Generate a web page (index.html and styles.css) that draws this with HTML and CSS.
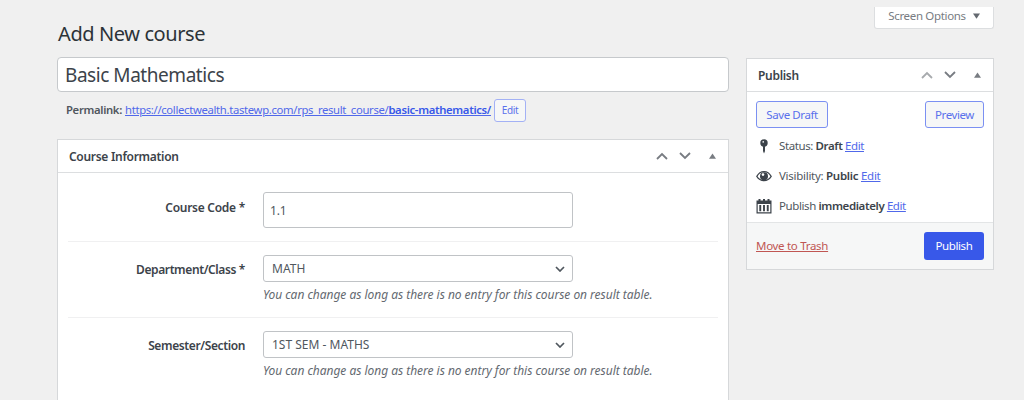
FILE: index.html
```html
<!DOCTYPE html>
<html lang="en">
<head>
<meta charset="utf-8">
<title>Add New course</title>
<link rel="stylesheet" href="styles.css">
</head>
<body>
<div class="page">
  <main class="main">
    <h1 class="page-title"><span>Add New course</span></h1>
    <div class="title-field"><span>Basic Mathematics</span></div>
    <div class="permalink">
      <span class="permalink-label">Permalink:</span>
      <a class="link permalink-url">https://collectwealth.tastewp.com/rps_result_course/<b>basic-mathematics/</b></a>
      <span class="btn btn-small">Edit</span>
    </div>
    <section class="box course-box">
      <header class="box-head">
        <h2 class="box-title course-title">Course Information</h2>
        <div class="handles">
          <svg class="chev" viewBox="0 0 12 8"><path d="M1 7 6 2l5 5"/></svg>
          <svg class="chev" viewBox="0 0 12 8"><path d="M1 1l5 5 5-5"/></svg>
          <svg class="tri" viewBox="0 0 8 6"><path d="M4 0l4 6H0z"/></svg>
        </div>
      </header>
      <div class="rows">
        <div class="row row-code">
          <label class="label label-code">Course Code *</label>
          <div class="field"><div class="input">1.1</div></div>
        </div>
        <div class="row">
          <label class="label">Department/Class *</label>
          <div class="field">
            <div class="select"><span>MATH</span><svg class="caret" viewBox="0 0 10 6"><path d="M1 1l4 4 4-4"/></svg></div>
            <p class="hint">You can change as long as there is no entry for this course on result table.</p>
          </div>
        </div>
        <div class="row row-last">
          <label class="label">Semester/Section</label>
          <div class="field">
            <div class="select"><span>1ST SEM - MATHS</span><svg class="caret" viewBox="0 0 10 6"><path d="M1 1l4 4 4-4"/></svg></div>
            <p class="hint">You can change as long as there is no entry for this course on result table.</p>
          </div>
        </div>
      </div>
    </section>
  </main>
  <aside class="side">
    <div class="screen-options"><span>Screen Options</span><svg class="tri-down" viewBox="0 0 8 6"><path d="M0 0h8L4 6z"/></svg></div>
    <section class="box publish-box">
      <header class="box-head">
        <h2 class="box-title">Publish</h2>
        <div class="handles">
          <svg class="chev faded" viewBox="0 0 12 8"><path d="M1 7 6 2l5 5"/></svg>
          <svg class="chev" viewBox="0 0 12 8"><path d="M1 1l5 5 5-5"/></svg>
          <svg class="tri" viewBox="0 0 8 6"><path d="M4 0l4 6H0z"/></svg>
        </div>
      </header>
      <div class="actions">
        <span class="btn btn-save">Save Draft</span>
        <span class="btn btn-preview">Preview</span>
      </div>
      <ul class="meta">
        <li>
          <svg class="icon" viewBox="0 0 16 16"><circle cx="8" cy="5" r="3.700"/><path d="M7 8h2v5l-1 2.500L7 13z"/><circle class="shine" cx="7.200" cy="3.900" r=".8"/></svg>
          <span>Status: <b>Draft</b> <a class="link">Edit</a></span>
        </li>
        <li>
          <svg class="icon" viewBox="0 0 16 16"><path class="outline" d="M.8 8.400C4.200 2 11.800 2 15.200 8.400 11.800 14 4.200 14 .8 8.400z"/><circle cx="8" cy="8.200" r="4"/><circle class="shine" cx="7" cy="6.600" r="1.300"/></svg>
          <span class="meta-visibility">Visibility: <b>Public</b> <a class="link">Edit</a></span>
        </li>
        <li>
          <svg class="icon" viewBox="0 0 16 16"><path fill-rule="evenodd" d="M.5 2.500h2V1h2v1.500h2.500V1h2v1.500h2.500V1h2v1.500h2v13H.5zM1.700 6v8.300h12.600V6z"/><path d="M3.300 7h1.900v6.300H3.300zM7.050 7h1.900v6.300h-1.900zM10.800 7h1.900v6.300h-1.900z"/></svg>
          <span>Publish <b>immediately</b> <a class="link">Edit</a></span>
        </li>
      </ul>
      <footer class="box-foot">
        <a class="trash">Move to Trash</a>
        <span class="btn-primary">Publish</span>
      </footer>
    </section>
  </aside>
</div>
</body>
</html>
```
FILE: styles.css
```css
* { box-sizing: border-box; }
body {
  margin: 0;
  height: 400px;
  overflow: hidden;
  background: #f0f0f0;
  font: 11.5px/16px "Noto Sans", "Open Sans", sans-serif;
  color: #50575e;
}
h1, h2, p, ul { margin: 0; padding: 0; font-weight: 400; }
b { font-weight: 600; color: #3c434a; }
span, a, h2, label, p { white-space: nowrap; }
svg { display: block; flex: none; }

.page {
  display: grid;
  grid-template-columns: 672px 248px;
  column-gap: 17px;
  padding-left: 57px;
}
.page-title { padding: 20px 0 0 1px; height: 57px; font-size: 20px; line-height: 28px; color: #2c3338; letter-spacing: -.4px; }
.title-field {
  height: 35px;
  padding: 0 7px;
  border: 1.500px solid #c6c9cc;
  border-radius: 4px;
  background: #fff;
  font-size: 19px;
  line-height: 35px;
  color: #3c434a;
  letter-spacing: -.45px;
}
.permalink { display: flex; align-items: center; height: 47px; padding: 0 0 11px 9px; font-size: 11.300px; letter-spacing: -.33px; }
.permalink-label { font-weight: 600; margin-right: 3px; }
.permalink-url b { color: #3858e9; }
.link { color: #5068ea; text-decoration: underline; }

.btn {
  display: flex;
  align-items: center;
  justify-content: center;
  height: 27px;
  border: 1px solid #7b90f2;
  border-radius: 3px;
  background: #f6f7f7;
  color: #5a71ec;
  letter-spacing: -.4px;
}
.btn-small { width: 32px; height: 23px; margin-left: 3px; font-size: 10px; letter-spacing: -.3px; border-color: #a3b1f5; }

.box { border: 1px solid #d6d8da; background: #fff; }
.box-head {
  display: flex;
  align-items: center;
  justify-content: space-between;
  height: 33px;
  padding: 0 12px 0 11px;
  border-bottom: 1px solid #dcdee0;
}
.box-title { padding-top: 1px; font-size: 12px; font-weight: 600; color: #3c434a; letter-spacing: -.3px; }
.handles { display: flex; align-items: center; gap: 11px; }
.chev { width: 12px; height: 8px; fill: none; stroke: #787c82; stroke-width: 1.800; }
.faded { stroke: #a7aaad; }
.tri { width: 7px; height: 6px; margin-left: 7px; fill: #787c82; }

.course-box { height: 280px; }
.rows { padding: 0 10px; font-size: 12px; }
.row { display: flex; height: 76px; padding-top: 13px; border-bottom: 1px solid #f0f0f1; }
.row-code { height: 69px; padding-top: 19px; }
.row-last { border: 0; }
.label { width: 177px; padding-top: 7px; font-weight: 600; text-align: right; color: #3c434a; letter-spacing: -.38px; }
.label-code { padding-top: 8px; letter-spacing: -.27px; }
.field { margin-left: 18px; }
.input, .select { width: 310px; border: 1px solid #c0c3c6; border-radius: 3px; }
.input { height: 36px; padding: 10px 6px; letter-spacing: -.2px; }
.select { display: flex; align-items: center; justify-content: space-between; height: 27px; padding: 0 7px 0 8px; }
.caret { width: 10px; height: 6px; fill: none; stroke: #50575e; stroke-width: 1.700; }
.hint { padding-top: 5px; font-style: italic; letter-spacing: -.03px; color: #646970; }

.screen-options {
  display: flex;
  align-items: center;
  justify-content: center;
  gap: 7px;
  width: 120px;
  height: 22px;
  margin: 7px 0 29px auto;
  padding-bottom: 4px;
  border: 1px solid #dcdee0;
  border-top: 0;
  border-radius: 0 0 3px 3px;
  background: #fff;
  color: #787c82;
  letter-spacing: -.33px;
}
.tri-down { width: 7px; height: 6px; fill: #646970; }
.publish-box { height: 212px; }
.actions { display: flex; justify-content: space-between; padding: 9px 9px 0; }
.btn-save { width: 72px; }
.btn-preview { width: 59px; }
.meta { list-style: none; height: 94px; padding: 3px 9px 0; letter-spacing: -.4px; }
.meta li { display: flex; align-items: center; gap: 7px; height: 30px; }
.meta-visibility { letter-spacing: -.28px; }
.icon { width: 16px; height: 16px; fill: #3c434a; }
.outline { fill: none; stroke: #3c434a; stroke-width: 1.200; }
.shine { fill: #fff; }
.box-foot {
  display: flex;
  align-items: center;
  justify-content: space-between;
  height: 47px;
  padding: 0 9px;
  border-top: 1px solid #e3e5e6;
  background: #f6f7f7;
}
.trash { color: #c05653; text-decoration: underline; letter-spacing: -.3px; }
.btn-primary { width: 60px; height: 28px; border-radius: 3px; background: #3858e9; color: #fff; line-height: 28px; text-align: center; letter-spacing: -.4px; }
```
